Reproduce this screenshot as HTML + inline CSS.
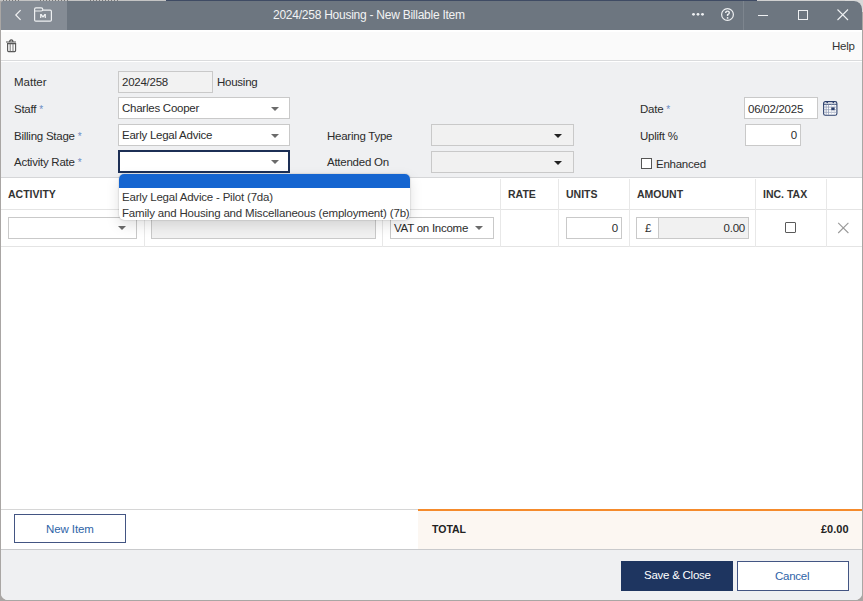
<!DOCTYPE html>
<html><head><meta charset="utf-8">
<style>
*{margin:0;padding:0;box-sizing:border-box}
html,body{width:863px;height:601px;overflow:hidden;background:#a9a6a4;font-family:"Liberation Sans",sans-serif;font-size:11.5px;letter-spacing:-0.25px;color:#333}
.a{position:absolute}
#topstrip{left:0;top:0;width:863px;height:1px;background:#c4c4c4}
#win{left:1px;top:1px;width:861px;height:599px;background:#fff;border-radius:3px 8px 7px 7px;overflow:hidden}
#title{left:0;top:0;width:861px;height:29px;background:#6d7680}
#tleft{left:0;top:0;width:66px;height:29px;background:#858c95}
#ttext{left:272px;top:7px;font-size:12px;color:#f2f3f4;white-space:nowrap}
#toolbar{left:0;top:29px;width:861px;height:31px;background:#fafafa;border-top:2px solid #fff;border-bottom:1px solid #dadbdd}
#form{left:0;top:61px;width:861px;height:116px;background:#eff0f2;border-bottom:1px solid #d5d6d8}
.lbl{position:absolute;white-space:nowrap;color:#2c2c2c}
.req{color:#6a8cc4;font-size:10px;margin-left:3px;position:relative;top:0}
.inp{position:absolute;height:22px;background:#fff;border:1px solid #c9c9c9}
.dis{background:#f1f1f1}
.txt{position:absolute;left:3px;top:4px;white-space:nowrap;color:#2c2c2c}
.arr{position:absolute;width:0;height:0;border-left:4px solid transparent;border-right:4px solid transparent;border-top:4px solid #6b6b6b}
.arrd{border-top-color:#222}
#grid{left:0;top:178px;width:861px;height:331px;background:#fff}
.hd{position:absolute;top:9px;font-weight:bold;font-size:10.5px;letter-spacing:0;color:#333;white-space:nowrap}
.vl{position:absolute;width:1px;background:#e8e8e8}
.hl{position:absolute;height:1px;background:#e4e4e4}
</style></head><body>
<div class="a" style="left:0;top:0;width:166px;height:1px;background:#c4c4c4"></div>
<div class="a" style="left:3px;top:0;width:16px;height:1px;background:repeating-linear-gradient(90deg,#777 0 1px,#c4c4c4 1px 3px)"></div>
<div class="a" style="left:40px;top:0;width:30px;height:1px;background:repeating-linear-gradient(90deg,#777 0 1px,#c4c4c4 1px 3px)"></div>
<div class="a" style="left:90px;top:0;width:30px;height:1px;background:repeating-linear-gradient(90deg,#777 0 1px,#c4c4c4 1px 3px)"></div>
<div class="a" style="left:166px;top:0;width:591px;height:1px;background:#3f4b64"></div>
<div class="a" style="left:757px;top:0;width:106px;height:1px;background:#d0d0d0"></div>
<div class="a" style="left:845px;top:0;width:18px;height:12px;background:#d8d8d8"></div>
<div class="a" id="win">
  <div class="a" id="title">
    <div class="a" id="tleft"></div>
    <!-- back chevron -->
    <svg class="a" style="left:12px;top:8px" width="10" height="14" viewBox="0 0 10 14"><path d="M7.6 1.2 L2.8 6 L7.6 10.8" fill="none" stroke="#f0f1f2" stroke-width="1.2"/></svg>
    <!-- folder M -->
    <svg class="a" style="left:31px;top:5px" width="22" height="18" viewBox="0 0 22 18"><path d="M2.6 4.6 V14 Q2.6 15.2 3.8 15.2 H18.2 Q19.4 15.2 19.4 14 V5.4 Q19.4 4.2 18.2 4.2 H10.6 M2.6 5 V3.2 Q2.6 1.9 3.9 1.9 H9.2 Q10.8 1.9 10.8 3.45 Q10.8 5 9.2 5 H2.6" fill="none" stroke="#eef0f2" stroke-width="1.2"/><path d="M8.1 12.1 V8 H9.6 L11 10 L12.4 8 H13.9 V12.1 H12.7 V9.9 L11.4 11.5 H10.6 L9.3 9.9 V12.1 Z" fill="#eef0f2"/></svg>
    <div class="a" id="ttext">2024/258 Housing - New Billable Item</div>
    <!-- dots -->
    <svg class="a" style="left:690px;top:10px" width="15" height="7"><circle cx="2.5" cy="3.3" r="1.4" fill="#eef0f2"/><circle cx="7" cy="3.3" r="1.4" fill="#eef0f2"/><circle cx="11.5" cy="3.3" r="1.4" fill="#eef0f2"/></svg>
    <!-- help circle -->
    <svg class="a" style="left:718px;top:5px" width="17" height="17" viewBox="0 0 17 17"><circle cx="8.5" cy="8.5" r="5.9" fill="none" stroke="#eef0f2" stroke-width="1.2"/><path d="M6.7 7 Q6.7 5.1 8.5 5.1 Q10.3 5.1 10.3 6.8 Q10.3 7.9 8.6 8.7 V9.9" fill="none" stroke="#eef0f2" stroke-width="1.45"/><circle cx="8.6" cy="11.9" r="0.9" fill="#eef0f2"/></svg>
    <div class="a" style="left:742px;top:0;width:1px;height:29px;background:#7d858e"></div>
    <!-- min -->
    <div class="a" style="left:757px;top:14px;width:10px;height:1px;background:#eef0f2"></div>
    <!-- max -->
    <div class="a" style="left:797px;top:9px;width:10px;height:10px;border:1px solid #eef0f2"></div>
    <!-- close -->
    <svg class="a" style="left:835px;top:7px" width="14" height="14" viewBox="0 0 14 14"><path d="M1.5 1.5 L12 12 M12 1.5 L1.5 12" stroke="#eef0f2" stroke-width="1.1"/></svg>
  </div>
  <div class="a" id="toolbar">
    <svg class="a" style="left:4px;top:7px" width="13" height="15" viewBox="0 0 13 15"><path d="M1 3 H11 M4.6 3 Q4.6 0.9 6.3 0.9 Q8 0.9 8 3" fill="none" stroke="#555" stroke-width="1.1"/><path d="M2.6 4.6 H10.6 V11.6 Q10.6 12.6 9.6 12.6 H3.6 Q2.6 12.6 2.6 11.6 Z" fill="none" stroke="#555" stroke-width="1.1"/><path d="M5.2 4.8 V12.4 M8 4.8 V12.4" stroke="#777" stroke-width="1"/></svg>
    <div class="a" style="left:831px;top:8px;color:#333">Help</div>
  </div>
  <div class="a" id="form">
    <div class="lbl" style="left:13px;top:14px;letter-spacing:0">Matter</div>
    <div class="inp dis" style="left:117px;top:9px;width:95px;background:#f2f2f2"><div class="txt">2024/258</div></div>
    <div class="lbl" style="left:216px;top:14px">Housing</div>

    <div class="lbl" style="left:13px;top:41px">Staff<span class="req">*</span></div>
    <div class="inp" style="left:117px;top:35px;width:172px"><div class="txt">Charles Cooper</div><div class="arr" style="left:152px;top:9px"></div></div>

    <div class="lbl" style="left:13px;top:68px">Billing Stage<span class="req">*</span></div>
    <div class="inp" style="left:117px;top:62px;width:172px"><div class="txt">Early Legal Advice</div><div class="arr" style="left:152px;top:9px"></div></div>

    <div class="lbl" style="left:13px;top:94px">Activity Rate<span class="req">*</span></div>
    <div class="inp" style="left:117px;top:88px;width:172px;height:23px;border:2px solid #1c2f55"><div class="arr" style="left:151px;top:8px"></div></div>

    <div class="lbl" style="left:326px;top:68px">Hearing Type</div>
    <div class="inp dis" style="left:430px;top:62px;width:143px"><div class="arr arrd" style="left:122px;top:9px"></div></div>
    <div class="lbl" style="left:326px;top:94px">Attended On</div>
    <div class="inp dis" style="left:430px;top:89px;width:143px"><div class="arr arrd" style="left:122px;top:9px"></div></div>

    <div class="lbl" style="left:639px;top:41px">Date<span class="req">*</span></div>
    <div class="inp" style="left:743px;top:35px;width:74px"><div class="txt" style="top:5px">06/02/2025</div></div>
    <svg class="a" style="left:822px;top:38px" width="16" height="17" viewBox="0 0 16 17"><rect x="0.6" y="1.6" width="13.3" height="13.6" rx="1.8" fill="#fff" stroke="#2b3f6c" stroke-width="1.1"/><path d="M0.6 4.3 H13.9" stroke="#2b3f6c" stroke-width="1.1"/><path d="M3.2 4.5 V14.8 M5.5 4.5 V14.8 M0.6 7.1 H13.9 M0.6 9.7 H13.9 M0.6 12.3 H13.9" stroke="#8b96b2" stroke-width="0.7"/><path d="M8.5 4.5 V14.8 M11.3 4.5 V14.8" stroke="#c5cbd9" stroke-width="0.6"/><rect x="8.3" y="7.4" width="3.3" height="2.8" fill="#2b3f6c"/><circle cx="4.2" cy="2.5" r="0.8" fill="#2b3f6c"/><circle cx="10.3" cy="2.5" r="0.8" fill="#2b3f6c"/></svg>

    <div class="lbl" style="left:639px;top:68px">Uplift %</div>
    <div class="inp" style="left:744px;top:62px;width:56px"><div class="txt" style="left:auto;right:3px">0</div></div>

    <div class="a" style="left:640px;top:96px;width:11px;height:11px;border:1px solid #555;background:#fff"></div>
    <div class="lbl" style="left:655px;top:96px">Enhanced</div>
  </div>

  <div class="a" id="grid">
    <div class="hd" style="left:7px">ACTIVITY</div>
    <div class="hd" style="left:507px">RATE</div>
    <div class="hd" style="left:565px">UNITS</div>
    <div class="hd" style="left:636px">AMOUNT</div>
    <div class="hd" style="left:762px">INC. TAX</div>
    <div class="hl" style="left:0;top:30px;width:861px"></div>
    <div class="hl" style="left:0;top:67px;width:861px"></div>
    <div class="vl" style="left:143px;top:0;height:68px"></div>
    <div class="vl" style="left:381px;top:0;height:68px"></div>
    <div class="vl" style="left:499px;top:0;height:68px"></div>
    <div class="vl" style="left:557px;top:0;height:68px"></div>
    <div class="vl" style="left:628px;top:0;height:68px"></div>
    <div class="vl" style="left:754px;top:0;height:68px"></div>
    <div class="vl" style="left:825px;top:0;height:68px"></div>

    <div class="inp" style="left:7px;top:38px;width:129px"><div class="arr" style="left:109px;top:8px"></div></div>
    <div class="inp dis" style="left:150px;top:38px;width:225px"></div>
    <div class="inp" style="left:389px;top:38px;width:104px"><div class="txt" style="top:4px">VAT on Income</div><div class="arr" style="left:84px;top:8px"></div></div>
    <div class="inp" style="left:565px;top:38px;width:56px"><div class="txt" style="left:auto;right:3px">0</div></div>
    <div class="inp" style="left:635px;top:38px;width:113px;background:#f1f1f1"><div class="a" style="left:0;top:0;width:22px;height:20px;background:#fff;border-right:1px solid #c9c9c9"></div><div class="txt" style="left:8px">£</div><div class="txt" style="left:auto;right:3px">0.00</div></div>
    <div class="a" style="left:784px;top:43px;width:11px;height:11px;border:1px solid #5a5a5a;border-radius:1px;background:#fff"></div>
    <svg class="a" style="left:835px;top:42px" width="14" height="14" viewBox="0 0 14 14"><path d="M2.2 1.8 L12.4 12 M12.4 1.8 L2.2 12" stroke="#9a9a9a" stroke-width="1.1"/></svg>
  </div>

  <div class="a" style="left:0;top:508px;width:861px;height:1px;background:#d6d6d6"></div>
  <div class="a" style="left:0;top:509px;width:861px;height:39px;background:#fff"></div>
  <div class="a" style="left:13px;top:513px;width:112px;height:29px;border:1px solid #435583;background:#fff"><div class="a" style="left:31px;top:8px;color:#2f64a8;letter-spacing:-0.1px">New Item</div></div>
  <div class="a" style="left:417px;top:508px;width:444px;height:2px;background:#f58b2c"></div>
  <div class="a" style="left:417px;top:510px;width:444px;height:38px;background:#fcf7f2"></div>
  <div class="a" style="left:431px;top:522px;font-weight:bold;font-size:10.5px;letter-spacing:0;color:#222">TOTAL</div>
  <div class="a" style="left:820px;top:522px;font-weight:bold;font-size:11px;letter-spacing:0;color:#222">£0.00</div>
  <div class="a" style="left:0;top:548px;width:861px;height:1px;background:#c9cacc"></div>
  <div class="a" style="left:0;top:549px;width:861px;height:50px;background:#eff0f2"></div>
  <div class="a" style="left:620px;top:560px;width:112px;height:30px;background:#1e3560"><div class="a" style="left:23px;top:8px;color:#fff">Save &amp; Close</div></div>
  <div class="a" style="left:736px;top:560px;width:112px;height:30px;border:1px solid #435583;background:#fff"><div class="a" style="left:37px;top:8px;color:#2f64a8">Cancel</div></div>

  <!-- dropdown -->
  <div class="a" style="left:118px;top:173px;width:291px;height:46px;background:#fff;border-radius:5px;box-shadow:0 0 1.5px rgba(0,0,0,0.35),0 5px 14px rgba(0,0,0,0.13);overflow:hidden">
    <div class="a" style="left:0;top:0;width:292px;height:14px;background:#1565d0"></div>
    <div class="a" style="left:3px;top:17px;white-space:nowrap;color:#333;letter-spacing:-0.2px">Early Legal Advice - Pilot (7da)</div>
    <div class="a" style="left:3px;top:33px;white-space:nowrap;color:#333;letter-spacing:-0.18px">Family and Housing and Miscellaneous (employment) (7b)</div>
  </div>
</div>
</body></html>
